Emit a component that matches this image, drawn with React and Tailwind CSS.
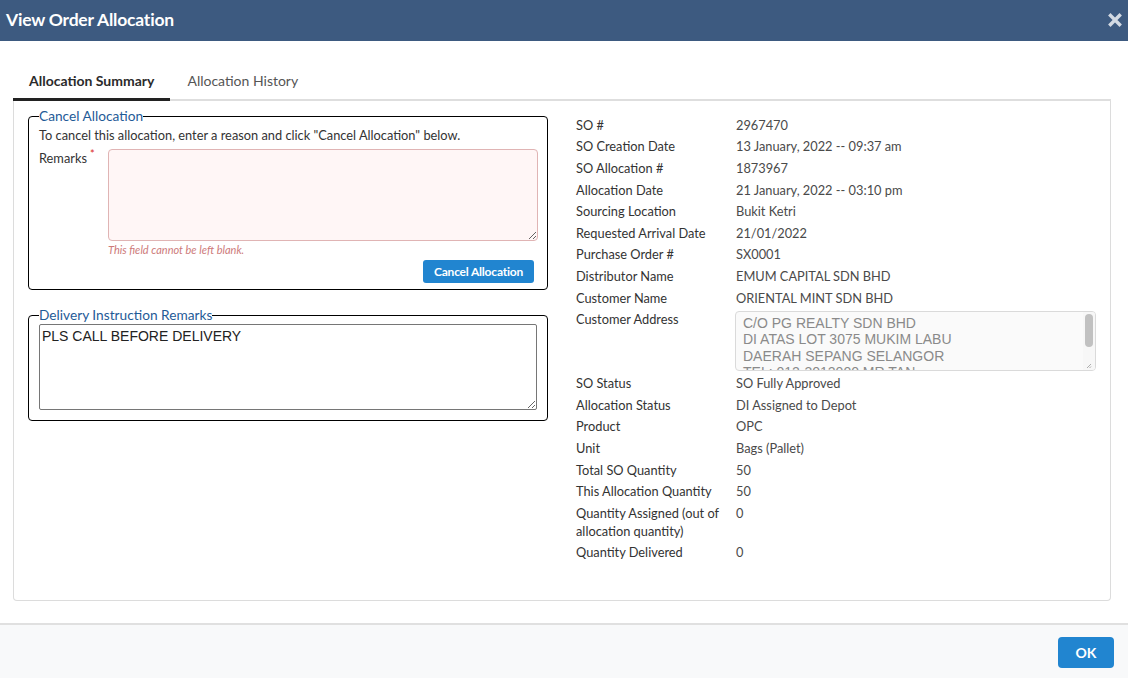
import React from "react";

const rows1 = [
  ["SO #", "2967470"],
  ["SO Creation Date", "13 January, 2022 -- 09:37 am"],
  ["SO Allocation #", "1873967"],
  ["Allocation Date", "21 January, 2022 -- 03:10 pm"],
  ["Sourcing Location", "Bukit Ketri"],
  ["Requested Arrival Date", "21/01/2022"],
  ["Purchase Order #", "SX0001"],
  ["Distributor Name", "EMUM CAPITAL SDN BHD"],
  ["Customer Name", "ORIENTAL MINT SDN BHD"],
];
const rows2 = [
  ["SO Status", "SO Fully Approved"],
  ["Allocation Status", "DI Assigned to Depot"],
  ["Product", "OPC"],
  ["Unit", "Bags (Pallet)"],
  ["Total SO Quantity", "50"],
  ["This Allocation Quantity", "50"],
  ["Quantity Assigned (out of allocation quantity)", "0"],
  ["Quantity Delivered", "0"],
];

function Row({ label, value }) {
  return (
    <>
      <div className="py-[1.8px] text-[#333] pr-2">{label}</div>
      <div className="py-[1.8px] text-[#4a4a4a]">{value}</div>
    </>
  );
}

export default function App() {
  return (
    <div
      className="w-[1128px] h-[678px] bg-white flex flex-col overflow-hidden"
      style={{ fontFamily: "Lato, 'Noto Sans', sans-serif" }}
    >
      {/* header */}
      <div className="h-[41px] bg-[#3d5a80] flex items-center justify-between pl-[6px] pr-[6px] shrink-0">
        <div className="text-white font-bold text-[17.5px] tracking-[-0.2px]">View Order Allocation</div>
        <svg width="14" height="14" viewBox="0 0 14 14" className="mt-[-2px]">
          <path d="M2.5 2.5 L11.5 11.5 M11.5 2.5 L2.5 11.5" stroke="#d3dae3" strokeWidth="3.4" strokeLinecap="square" />
        </svg>
      </div>

      {/* body */}
      <div className="flex-1 pl-[13px] pr-[17px] pt-[23px] pb-[22px] flex flex-col">
        {/* tabs */}
        <div className="flex border-b-2 border-[#dedede] h-[37px]">
          <div className="px-[16px] text-[14px] font-bold text-[#2b2b2b] border-b-[3px] border-[#222] mb-[-2px] pt-[6px]">
            Allocation Summary
          </div>
          <div className="pl-[17px] pr-[16px] text-[14px] text-[#555] pt-[6px]">Allocation History</div>
        </div>

        {/* panel */}
        <div className="flex-1 border border-t-0 border-[#dcdcdc] rounded-b-[4px] flex pl-[14px] pt-[7px] text-[12.8px] leading-[18px]">
          {/* left */}
          <div className="w-[520px] flex flex-col">
            <fieldset className="border border-black rounded-[4px] px-[10px] pb-[6px]">
              <legend className="text-[13.7px] leading-[16px] text-[#1f5b97] p-0">Cancel Allocation</legend>
              <div className="text-[#333] mt-[2px]">
                To cancel this allocation, enter a reason and click "Cancel Allocation" below.
              </div>
              <div className="flex mt-[5px]">
                <div className="w-[69px] text-[#333] shrink-0">
                  Remarks<span className="text-[#db2828] text-[11px] align-top relative top-[-4px] ml-[3px]">*</span>
                </div>
                <div className="flex-1 mr-[-1px]">
                  <textarea
                    className="w-full h-[92px] block bg-[#fff6f6] border border-[#e0b4b4] rounded-[4px] outline-none resize-y"
                  />
                  <div className="text-[11px] italic text-[#cd7a7a] mt-[1px] leading-[16px]">This field cannot be left blank.</div>
                </div>
              </div>
              <div className="flex justify-end mt-[2px] mr-[3px]">
                <button className="bg-[#2185d0] text-white text-[12px] font-bold rounded-[3px] h-[23px] w-[111px] tracking-[-0.2px]">
                  Cancel Allocation
                </button>
              </div>
            </fieldset>

            <fieldset className="border border-black rounded-[4px] px-[10px] pb-[10px] mt-[17px]">
              <legend className="text-[13.7px] leading-[16px] text-[#1f5b97] p-0">Delivery Instruction Remarks</legend>
              <textarea
                className="w-full h-[86px] block border border-[#767676] rounded-[2px] outline-none px-[2px] pt-[3px] text-[14px] leading-[16px] text-[#222] mt-[1px]"
                style={{ fontFamily: "'Liberation Sans', Arial, sans-serif" }}
                defaultValue="PLS CALL BEFORE DELIVERY"
              />
            </fieldset>
          </div>

          {/* right */}
          <div className="ml-[28px] pt-[6px] w-[525px]">
            <div className="grid grid-cols-[160px_1fr]">
              {rows1.map(([l, v]) => (
                <Row key={l} label={l} value={v} />
              ))}
              <div className="py-[1.8px] text-[#333]">Customer Address</div>
              <div className="pt-[2.5px] pb-[1.5px]">
                <div
                  className="h-[60px] w-[361px] ml-[-1px] border border-[#dadada] rounded-[4px] bg-[#fafafa] flex overflow-hidden"
                >
                  <div
                    className="flex-1 pl-[7px] pt-[3px] text-[14px] leading-[16.5px] text-[#8a8a8a] whitespace-pre overflow-hidden"
                    style={{ fontFamily: "'Liberation Sans', Arial, sans-serif" }}
                  >
                    {"C/O PG REALTY SDN BHD\nDI ATAS LOT 3075 MUKIM LABU\nDAERAH SEPANG SELANGOR\nTEL: 012-3012000 MR TAN"}
                  </div>
                  <div className="w-[12px] flex flex-col items-center pt-[2px] pb-[1px] bg-[#f7f7f7]">
                    <div className="w-[8px] h-[33px] rounded-[4px] bg-[#c1c1c1]" />
                    <div className="flex-1" />
                    <svg width="6" height="6" viewBox="0 0 6 6">
                      <path d="M5 1 L1 5 M5 3.5 L3.5 5" stroke="#999" strokeWidth="0.8" />
                    </svg>
                  </div>
                </div>
              </div>
              {rows2.map(([l, v]) => (
                <Row key={l} label={l} value={v} />
              ))}
            </div>
          </div>
        </div>
      </div>

      {/* footer */}
      <div className="h-[55px] shrink-0 border-t-2 border-[#e0e0e0] bg-[#f8f9fa] flex items-center justify-end pr-[14px]">
        <button className="bg-[#2185d0] text-white font-bold text-[14px] rounded-[4px] w-[56px] h-[31px] mt-[1px]">OK</button>
      </div>
    </div>
  );
}
